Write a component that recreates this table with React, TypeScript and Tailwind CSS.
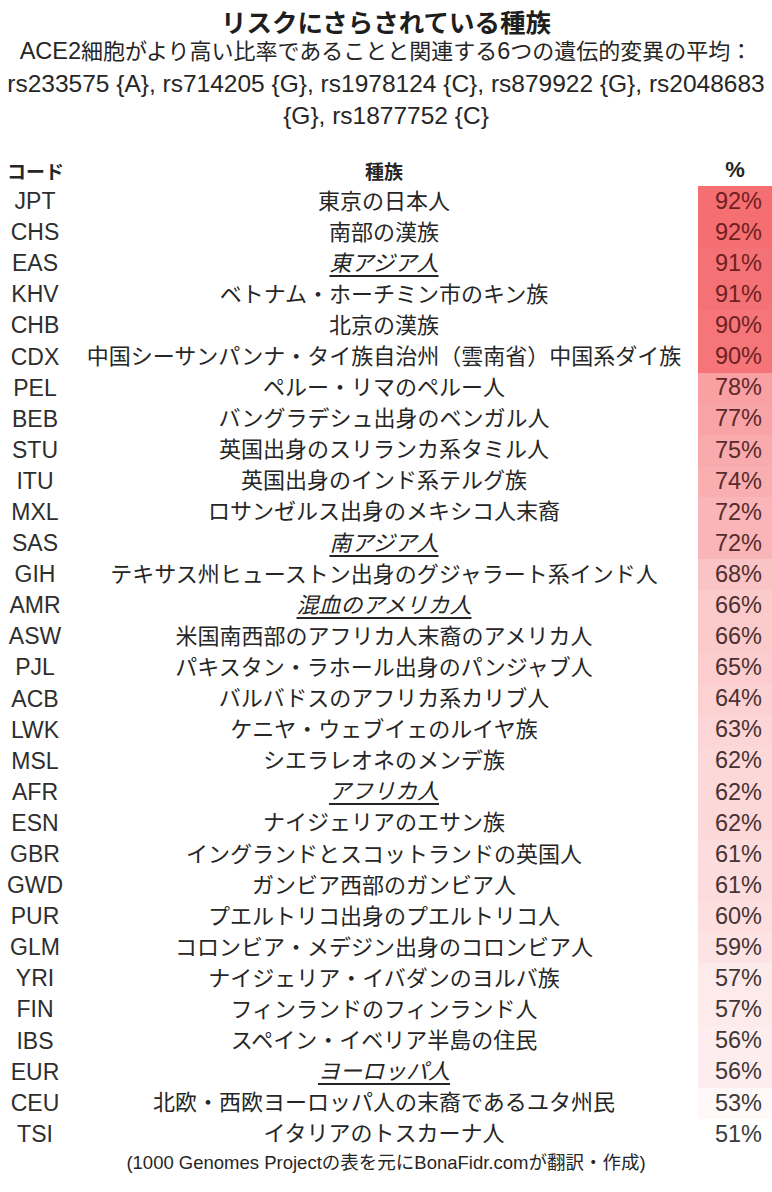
import React from "react";

type Row = [string, string, number, boolean?];

const rows: Row[] = [
  ["JPT", "東京の日本人", 92],
  ["CHS", "南部の漢族", 92],
  ["EAS", "東アジア人", 91, true],
  ["KHV", "ベトナム・ホーチミン市のキン族", 91],
  ["CHB", "北京の漢族", 90],
  ["CDX", "中国シーサンパンナ・タイ族自治州（雲南省）中国系ダイ族", 90],
  ["PEL", "ペルー・リマのペルー人", 78],
  ["BEB", "バングラデシュ出身のベンガル人", 77],
  ["STU", "英国出身のスリランカ系タミル人", 75],
  ["ITU", "英国出身のインド系テルグ族", 74],
  ["MXL", "ロサンゼルス出身のメキシコ人末裔", 72],
  ["SAS", "南アジア人", 72, true],
  ["GIH", "テキサス州ヒューストン出身のグジャラート系インド人", 68],
  ["AMR", "混血のアメリカ人", 66, true],
  ["ASW", "米国南西部のアフリカ人末裔のアメリカ人", 66],
  ["PJL", "パキスタン・ラホール出身のパンジャブ人", 65],
  ["ACB", "バルバドスのアフリカ系カリブ人", 64],
  ["LWK", "ケニヤ・ウェブイェのルイヤ族", 63],
  ["MSL", "シエラレオネのメンデ族", 62],
  ["AFR", "アフリカ人", 62, true],
  ["ESN", "ナイジェリアのエサン族", 62],
  ["GBR", "イングランドとスコットランドの英国人", 61],
  ["GWD", "ガンビア西部のガンビア人", 61],
  ["PUR", "プエルトリコ出身のプエルトリコ人", 60],
  ["GLM", "コロンビア・メデジン出身のコロンビア人", 59],
  ["YRI", "ナイジェリア・イバダンのヨルバ族", 57],
  ["FIN", "フィンランドのフィンランド人", 57],
  ["IBS", "スペイン・イベリア半島の住民", 56],
  ["EUR", "ヨーロッパ人", 56, true],
  ["CEU", "北欧・西欧ヨーロッパ人の末裔であるユタ州民", 53],
  ["TSI", "イタリアのトスカーナ人", 51],
];

const MIN = 51;
const MAX = 92;

function mix(a: number, b: number, t: number) {
  return Math.round(a + (b - a) * t);
}

function cellBg(v: number) {
  const t = (v - MIN) / (MAX - MIN);
  const r = mix(255, 244, t);
  const g = mix(255, 110, t);
  const b = mix(255, 114, t);
  return `rgb(${r},${g},${b})`;
}

function cellFg(v: number) {
  const t = (v - MIN) / (MAX - MIN);
  const r = mix(58, 112, t);
  const g = mix(58, 30, t);
  const b = mix(58, 32, t);
  return `rgb(${r},${g},${b})`;
}

const FONT = "font-['Liberation_Sans','Noto_Sans_CJK_JP',sans-serif]";

export default function App() {
  return (
    <div className={`w-[772px] h-[1192px] bg-white text-[#262626] ${FONT} overflow-hidden`}>
      <div className="flex flex-col pt-[6px]">
        <div className="h-[30px] flex items-center justify-center text-[25.5px] font-bold font-['Noto_Sans_CJK_JP',sans-serif] leading-none text-[#1e1e1e]">
          リスクにさらされている種族
        </div>
        <div className="h-[32px] flex items-center justify-center whitespace-nowrap text-[22px] leading-none">
          <span className="text-[23.5px]">ACE2</span>
          <span>細胞がより高い比率であることと関連する</span>
          <span className="text-[23.5px]">6</span>
          <span>つの遺伝的変異の平均：</span>
        </div>
        <div className="h-[32px] flex items-center justify-center whitespace-nowrap text-[24.5px] leading-none">
          rs233575 {"{A}"}, rs714205 {"{G}"}, rs1978124 {"{C}"}, rs879922 {"{G}"}, rs2048683
        </div>
        <div className="h-[32px] flex items-center justify-center whitespace-nowrap text-[24.5px] leading-none">
          {"{G}"}, rs1877752 {"{C}"}
        </div>

        <div className="mt-[22px] h-[32px] flex items-center font-bold text-[19px] leading-none">
          <div className="w-[70px] pl-[7px] font-['Noto_Sans_CJK_JP',sans-serif]">コード</div>
          <div className="flex-1 text-center font-['Noto_Sans_CJK_JP',sans-serif]">種族</div>
          <div className="w-[74px] text-center text-[22px]">%</div>
        </div>

        <div className="flex flex-col">
          {rows.map(([code, name, v, ital]) => (
            <div key={code} className="h-[31.1px] flex items-center leading-none">
              <div className="w-[70px] text-center text-[23px] text-[#2e2e2e]">{code}</div>
              <div className="flex-1 flex justify-center text-[22px] text-[#262626]">
                <span
                  className={
                    ital
                      ? "italic underline underline-offset-[4px] decoration-[1.5px]"
                      : ""
                  }
                >
                  {name}
                </span>
              </div>
              <div
                className="w-[74px] h-full flex items-center justify-end pr-[10px] text-[23.5px]"
                style={{ backgroundColor: cellBg(v), color: cellFg(v) }}
              >
                {v}%
              </div>
            </div>
          ))}
        </div>

        <div className="h-[27px] flex items-center justify-center whitespace-nowrap text-[18.5px] leading-none text-[#262626]">
          (1000 Genomes Projectの表を元にBonaFidr.comが翻訳・作成)
        </div>
      </div>
    </div>
  );
}
